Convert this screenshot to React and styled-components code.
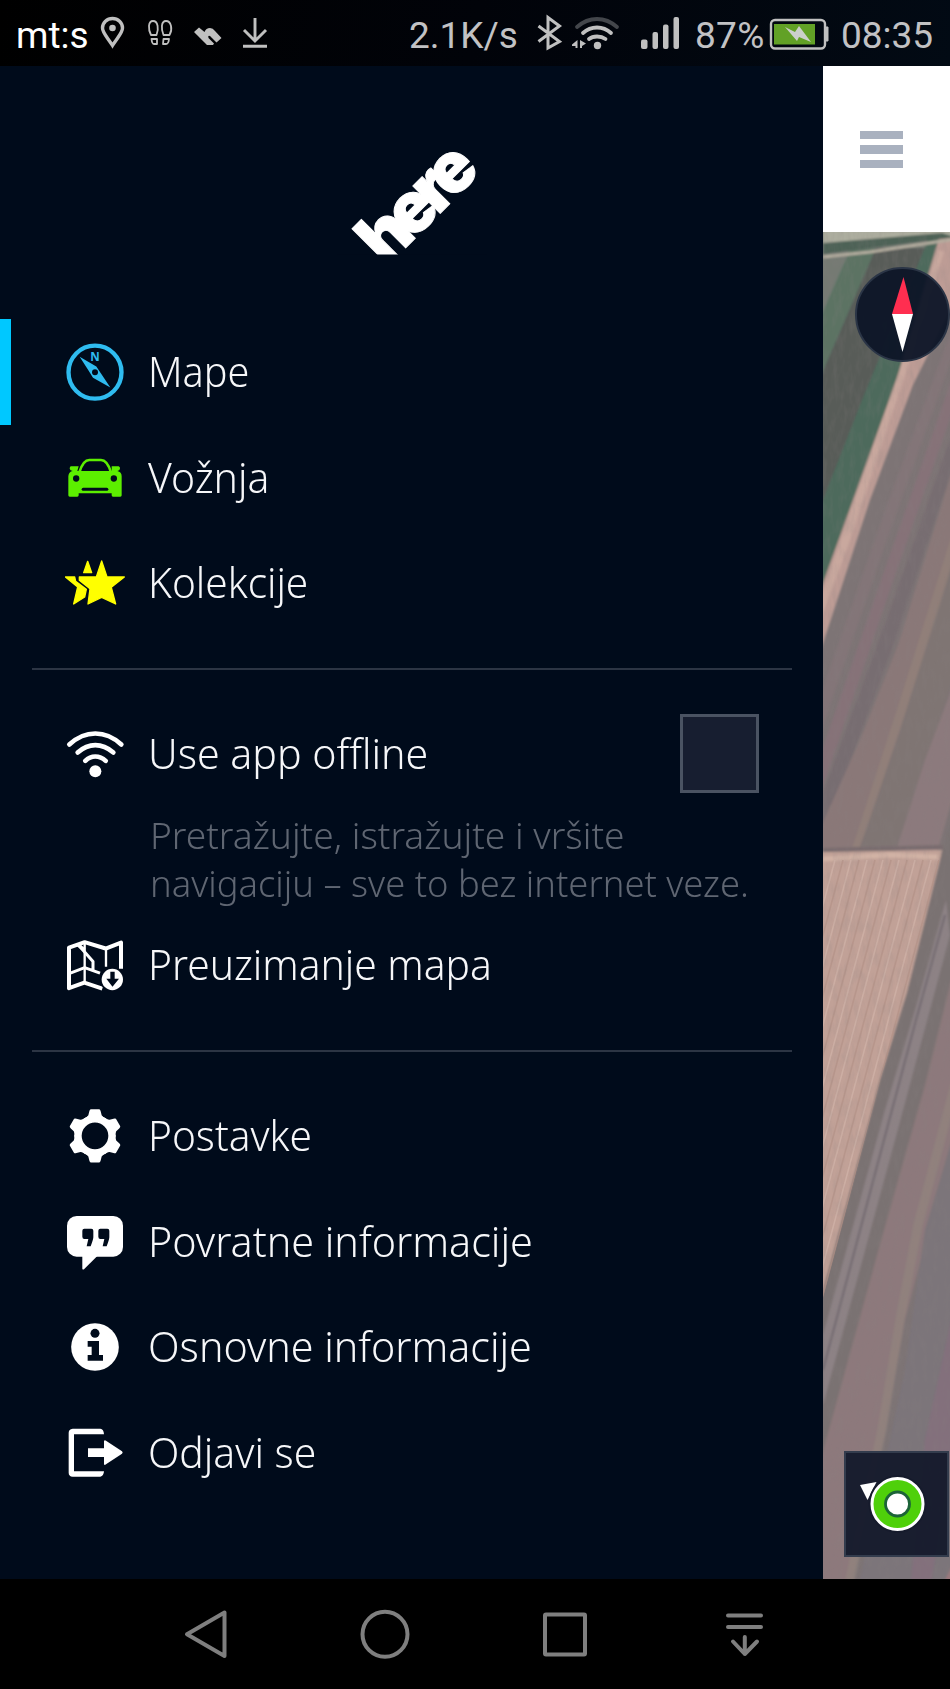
import React, { useState } from 'react';
import styled, { createGlobalStyle } from 'styled-components';

const GlobalStyle = createGlobalStyle`
  * {
    box-sizing: border-box;
  }

  body {
    margin: 0;
    background: #000;
  }
`;

const Screen = styled.div`
  display: flex;
  flex-direction: column;
  width: 950px;
  height: 1689px;
  overflow: hidden;
  font-family: 'Noto Sans', sans-serif;
`;

const StatusBar = styled.header`
  display: flex;
  justify-content: space-between;
  height: 66px;
  padding: 0 16px 0 16px;
  background: linear-gradient(100deg, #000 0%, #010309 50%, #020a14 100%);
  color: #c2c2c4;
  font-family: Roboto, sans-serif;
  font-size: 37px;
  line-height: 71px;
  white-space: nowrap;
`;

const StatusGroup = styled.div`
  display: flex;
`;

const StatusText = styled.span`
  width: ${(props) => props.$width}px;
  color: ${(props) => props.$color || 'inherit'};
  letter-spacing: ${(props) => props.$spacing || 0}px;
`;

const StatusSvg = styled.svg`
  display: block;
  flex: none;
  height: 66px;
`;

const Main = styled.main`
  display: flex;
  height: 1513px;
`;

const Drawer = styled.aside`
  display: flex;
  flex-direction: column;
  width: 823px;
  background: #000b1b;
`;

const LogoArea = styled.div`
  display: flex;
  justify-content: center;
  height: 253px;
  padding-top: 74px;
`;

const LogoSvg = styled.svg`
  width: 150px;
  height: 140px;
`;

const MenuRow = styled.div`
  display: flex;
  align-items: center;
  height: 105.6px;
  padding-right: 64px;
  padding-left: ${(props) => (props.$active ? 54 : 65)}px;
  border-left: ${(props) => (props.$active ? '11px solid #00c8ff' : 'none')};
`;

const RowIcon = styled.svg`
  flex: none;
  width: 60px;
  height: 60px;
  color: ${(props) => props.$color || '#fff'};
`;

const RowLabel = styled.span`
  flex: 1;
  margin-bottom: 1.4px;
  margin-left: 23px;
  color: #f6f7f9;
  font-size: 43px;
  font-weight: 300;
  line-height: 60px;
  white-space: nowrap;
  transform: scaleX(${(props) => props.$stretch || 0.95});
  transform-origin: left center;
`;

const Checkbox = styled.button`
  width: 79px;
  height: 79px;
  padding: 0;
  border: 3px solid #4a5362;
  background: ${(props) => (props.$checked ? '#00c8ff' : '#171e30')};
`;

const Description = styled.p`
  height: 105.6px;
  margin: 0;
  padding: 4px 0 0 150px;
  color: #5f6672;
  font-size: 37.5px;
  font-weight: 300;
  line-height: 48px;
  white-space: nowrap;
`;

const DescriptionLine = styled.span`
  display: block;
  transform: scaleX(${(props) => props.$stretch});
  transform-origin: left center;
`;

const Divider = styled.hr`
  width: 760px;
  height: 2px;
  margin: 32px 0 31.2px 32px;
  border: none;
  background: #2c3544;
`;

const MapColumn = styled.section`
  position: relative;
  width: 127px;
  overflow: hidden;
`;

const MapHeader = styled.div`
  display: flex;
  flex-direction: column;
  gap: 6px;
  height: 166px;
  padding: 65px 0 0 37px;
  background: #fff;
`;

const HamburgerBar = styled.span`
  width: 43px;
  height: 8.4px;
  background: #a9b1bf;
`;

const MapSvg = styled.svg`
  display: block;
  width: 127px;
  height: 1347px;
`;

const CompassButton = styled.div`
  position: absolute;
  top: 201px;
  left: 32px;
  width: 95px;
  height: 95px;
  border: 2px solid #2b3546;
  border-radius: 50%;
  background: rgba(12, 20, 38, 0.94);
`;

const LocateButton = styled.div`
  position: absolute;
  top: 1385px;
  left: 21px;
  width: 105px;
  height: 106px;
  border: 2px solid #333c4d;
  background: rgba(22, 27, 44, 0.97);
`;

const OverlaySvg = styled.svg`
  display: block;
  width: 100%;
  height: 100%;
`;

const NavBar = styled.nav`
  display: flex;
  height: 110px;
  padding-left: 116px;
  background: #000;
`;

const NavButton = styled.div`
  display: flex;
  align-items: center;
  justify-content: center;
  width: 179.6px;
`;

const NavSvg = styled.svg`
  width: 60px;
  height: 60px;
  fill: none;
  stroke: #7f7f7f;
  stroke-width: 4;
  stroke-linecap: round;
  stroke-linejoin: round;
`;

const DARK = '#000b1b';

// every row icon is drawn on a 180 unit grid around its own centre
function MenuIcon({ cx, cy, color, children }) {
  return (
    <RowIcon $color={color} viewBox={`${cx - 90} ${cy - 90} 180 180`} fill="currentColor">
      {children}
    </RowIcon>
  );
}

function CompassIcon() {
  return (
    <MenuIcon cx={285} cy={185.4} color="#2fbcf0">
      <circle cx="285" cy="186" r="79.5" fill="none" stroke="currentColor" strokeWidth="13" />
      <path d="M239 140L289 169L303 190L331 232L279 203L266 182Z" />
      <circle cx="285" cy="186" r="9" fill={DARK} />
      <text
        x="285"
        y="151"
        textAnchor="middle"
        fontFamily="Open Sans, sans-serif"
        fontSize="35"
        fontWeight="700"
      >
        N
      </text>
    </MenuIcon>
  );
}

function CarIcon() {
  return (
    <MenuIcon cx={285} cy={502} color="#5cef00">
      <path
        d="M238 488C246 462 254 451 268 451H303C317 451 325 462 333 488"
        fill="none"
        stroke="currentColor"
        strokeWidth="8"
      />
      <path d="M212 470H236L232 484H355L335 484V470H356Q361 472 360 477Q359 482 352 484Q365 487 365 500V557Q365 561 361 561H339Q335 561 335 557V551H236V557Q236 561 232 561H209Q205 561 205 557V500Q206 486 218 484Q210 482 209 477Q209 472 212 470Z" />
      <circle cx="228.500" cy="506.500" r="9.500" fill={DARK} />
      <circle cx="341.500" cy="506.500" r="9.500" fill={DARK} />
      <rect x="245" y="534" width="80" height="9" rx="4.500" fill={DARK} />
    </MenuIcon>
  );
}

function StarsIcon() {
  return (
    <MenuIcon cx={285} cy={819} color="#ffff00">
      <g stroke="currentColor" strokeWidth="4" strokeLinejoin="round">
        <path d="M305 753L321 801H373L334 832L347 882L305 862L264 882L270 836L238 811V801H289Z" />
        <path d="M263 754L275 788H251Z" />
        <path d="M196 801H224L227 814L259 838L254 861L221 882L233 831Z" />
      </g>
    </MenuIcon>
  );
}

function WifiIcon() {
  return (
    <MenuIcon cx={135} cy={161.4}>
      <g fill="none" stroke="currentColor" strokeWidth="14" strokeLinecap="round">
        <path d="M58 133Q94 100 136 100T214 133" />
        <path d="M83 157Q108 135 136 135T190 157" />
        <path d="M106 182Q119 169 136 169T167 182" />
      </g>
      <circle cx="136" cy="213" r="18" />
    </MenuIcon>
  );
}

function MapDownloadIcon() {
  return (
    <MenuIcon cx={135} cy={794.4}>
      <g fill="none" stroke="currentColor" strokeLinejoin="round">
        <path d="M157 865L103 847L57 864V742L104 726L167 745L213 727V806" strokeWidth="12" />
        <path d="M104 726V847M168 745V800" strokeWidth="7" />
        <path d="M57 820L104 802L150 819M86 735L129 784V808" strokeWidth="9" />
        <path d="M84 733L103 750" strokeWidth="11" />
      </g>
      <circle cx="187" cy="838" r="37" fill={DARK} />
      <circle cx="187" cy="838" r="32" />
      <path d="M181 815H194V836H207L187.500 860L169 836H181Z" fill={DARK} />
    </MenuIcon>
  );
}

function GearIcon() {
  return (
    <MenuIcon cx={135} cy={137.4}>
      <circle cx="135" cy="137" r="51" fill="none" stroke="currentColor" strokeWidth="22" />
      {[0, 60, 120, 180, 240, 300].map((angle) => (
        <path
          key={angle}
          d="M122 57H148Q151 58 152 63L155 75Q158 81 168 85L152 92H118L102 85Q112 81 115 75L118 63Q119 58 122 57Z"
          transform={`rotate(${angle} 135 137)`}
        />
      ))}
    </MenuIcon>
  );
}

function FeedbackIcon() {
  return (
    <MenuIcon cx={135} cy={454}>
      <rect x="51" y="379" width="168" height="122" rx="29" />
      <path d="M97 495V537Q98 541 102 539L142 499Z" />
      {[0, 48].map((shift) => (
        <path
          key={shift}
          d="M103 417H124Q130 417 130 423V443Q130 449 122 470H110L115 448H103Q97 448 97 441V423Q97 417 103 417Z"
          transform={`translate(${shift} 0)`}
          fill={DARK}
        />
      ))}
    </MenuIcon>
  );
}

function InfoIcon() {
  return (
    <MenuIcon cx={135} cy={771}>
      <circle cx="135" cy="771" r="71.500" />
      <circle cx="135" cy="730" r="13.500" fill={DARK} />
      <path d="M113 753H147V795H159V812H113V795H125V770H113Z" fill={DARK} />
    </MenuIcon>
  );
}

function SignOutIcon() {
  return (
    <MenuIcon cx={135} cy={1088}>
      <path d="M68 1015H151Q161 1016 162 1032H72V1143H162Q161 1158 151 1159H68Q56 1158 56 1147V1027Q56 1016 68 1015Z" />
      <path d="M114 1074H162V1053Q163 1048 168 1051L216 1083Q220 1087 216 1090L168 1122Q163 1126 162 1121V1100H114Z" />
    </MenuIcon>
  );
}

function Logo() {
  return (
    <LogoArea>
      <LogoSvg viewBox="337 140 150 140">
        <text
          transform="translate(386 267.500) rotate(-45) scale(0.945 0.97)"
          fill="#fff"
          stroke="#fff"
          strokeWidth="1"
          fontFamily="Inter, sans-serif"
          fontSize="73"
          fontWeight="900"
          letterSpacing="-7.2"
        >
          here
        </text>
        <rect x="337" y="254.500" width="150" height="26" fill={DARK} />
      </LogoSvg>
    </LogoArea>
  );
}

function PhoneStatusBar() {
  return (
    <StatusBar>
      <StatusGroup>
        <StatusText $width={78} $color="#fff">mt:s</StatusText>
        <StatusSvg width="180" viewBox="94 0 180 66" fill="none" stroke="#c0c0c0">
          <path
            d="M112.500 45.500C108 38 102.500 33 102.500 28A10 9.500 0 0 1 122.500 28C122.500 33 117 38 112.500 45.500Z"
            strokeWidth="3.400"
          />
          <circle cx="112.500" cy="28" r="3.300" fill="#c0c0c0" stroke="none" />
          <g strokeWidth="1.800" strokeLinejoin="round">
            <path d="M151 35C148 29 148 21 153 21S159 29 156.500 35Z" />
            <path d="M163.500 35C161 29 161 21 166 21S173 29 169.500 35Z" />
            <path d="M151.500 39H157V44H154Q152 44 151.500 39Z" />
            <path d="M163.500 39H169Q168.500 44 166 44H163Z" />
          </g>
          <path
            d="M194 32L199 27.500L204.500 32Q206 28 210 28Q213 28 215 31L221.500 38L216.500 42.500L210 36Q207.500 35 208.500 38L214 43.500L213 45H207Z"
            fill="#c0c0c0"
            stroke="none"
          />
          <path d="M255 18V41M244 30L255 41L266 30M243 46.300H267" strokeWidth="2.900" />
        </StatusSvg>
      </StatusGroup>
      <StatusGroup>
        <StatusText $width={120}>2.1K/s</StatusText>
        <StatusSvg width="166" viewBox="529 0 166 66" fill="none" stroke="#c0c0c0">
          <path d="M538.500 26L559.500 41.500L548 48V17.500L559.500 26L538.500 41.500" strokeWidth="3" />
          <g strokeWidth="3.800" strokeLinecap="round">
            <path d="M577 27Q586 19 597 19T617 27" stroke="#43464b" />
            <path d="M583 33Q589 27.500 597 27.500T611 33" />
            <path d="M589 39Q592 36.500 597 36.500T605.500 39" />
          </g>
          <g fill="#c0c0c0" stroke="none">
            <circle cx="597.500" cy="45.500" r="3.700" />
            <path d="M572 44.500L577.500 40V48H575.500V46H572ZM580 40L586 43.500L582 46V48H580Z" />
            <rect x="641" y="39.500" width="6.500" height="9.500" rx="2" />
            <rect x="652.500" y="32" width="5.500" height="17" rx="2" />
            <rect x="663" y="24.500" width="5.500" height="24.500" rx="2" />
            <rect x="673.500" y="17" width="5.500" height="32" rx="2" />
          </g>
        </StatusSvg>
        <StatusText $width={74} $spacing={0.3}>87%</StatusText>
        <StatusSvg width="72" viewBox="769 0 72 66">
          <rect x="771" y="20" width="54" height="28.500" rx="4" fill="none" stroke="#c0c0c0" strokeWidth="2.400" />
          <path d="M826 27H828V41H826Z" fill="#c0c0c0" stroke="#c0c0c0" />
          <rect x="774" y="24" width="41" height="20.500" fill="#62a126" />
          <path d="M785 27L795 32L799 26L805 34L811 42L799 37L797 41Z" fill="#cbd0cb" />
        </StatusSvg>
        <StatusText $width={93}>08:35</StatusText>
      </StatusGroup>
    </StatusBar>
  );
}

function Aerial() {
  const furrows = Array.from({ length: 34 }, (_, i) => i * 8);

  return (
    <MapSvg viewBox="823 232 127 1347" preserveAspectRatio="none">
      <defs>
        <filter id="soil" x="0" y="0" width="1" height="1">
          <feTurbulence type="fractalNoise" baseFrequency="0.18 0.06" numOctaves="3" seed="4" />
          <feColorMatrix values="0 0 0 0 0.25  0 0 0 0 0.22  0 0 0 0 0.22  0.9 0 0 0 -0.36" />
        </filter>
        <filter id="soften">
          <feGaussianBlur stdDeviation="1.2" />
        </filter>
        <clipPath id="peachField">
          <path d="M823 860L940 858L907 993L880 1080L823 1300Z" />
        </clipPath>
      </defs>
      <rect x="823" y="232" width="127" height="1347" fill="#7d7475" />
      <g filter="url(#soften)">
        <path d="M815 225H955L815 390Z" fill="#747a73" />
        <path d="M850 250L880 248L815 392V330Z" fill="#5b7364" />
        <path d="M876 248H930L880 372L815 525V390Z" fill="#585c59" />
        <path d="M928 240H942L897 378L815 615V520L862 400Z" fill="#4d6a5c" />
        <path d="M940 235H960V290L913 385L870 500L815 668V605L897 378Z" fill="#bd9c95" />
        <path d="M938 250L944 252L906 372L850 540L815 635V615L897 378Z" fill="#c9a89e" />
        <path d="M955 350L887 540L815 750V710L885 510L955 320Z" fill="#857579" opacity="0.7" />
        <path d="M955 405L890 590L815 810V770L888 560L955 370Z" fill="#887279" opacity="0.8" />
        <path d="M955 460L895 640L815 855V815L890 610L955 425Z" fill="#766b71" opacity="0.8" />
        <path d="M955 462L898 645L860 740L815 840V855H857L900 730L955 550Z" fill="#8a7878" />
        <path d="M955 525L900 700L850 855H857L905 725L955 555Z" fill="#948279" opacity="0.7" />
        <path d="M955 557V675L893 860H856L900 730Z" fill="#7f7573" />
        <path d="M955 680L925 760L893 860H935L955 790Z" fill="#8c7a7d" />
        <path d="M823 228H955V237L885 244L823 245Z" fill="#adae9f" />
        <path d="M823 243L942 233L955 237L823 254Z" fill="#4e6256" />
        <path d="M823 257L870 252L955 239" fill="none" stroke="#b4ad9f" strokeWidth="3" />
        <path d="M815 852L942 850L940 862L907 993L880 1080L815 1330Z" fill="#c1a197" />
        <path d="M823 859L890 855L938 857" fill="none" stroke="#d1b2a5" strokeWidth="5" />
        <path d="M823 850L943 847" stroke="#796c6e" strokeWidth="4" />
        <path d="M942 852L960 790V1000L905 1170L815 1500V1320L880 1080L907 993Z" fill="#7a7272" />
        <path d="M946 900L915 1010L885 1110L823 1335V1405L895 1140L950 935Z" fill="#8d8285" />
        <path d="M945 915L916 1020L880 1155L823 1370" fill="none" stroke="#716970" strokeWidth="2" />
        <path d="M960 945L925 1085L884 1230L815 1480V1590H850L884 1435L905 1320L960 1110Z" fill="#8d797b" />
        <path d="M955 1085L918 1225L900 1320L882 1430L850 1580" fill="none" stroke="#93847f" strokeWidth="9" opacity="0.7" />
        <path d="M955 1130L925 1230L905 1370L858 1590H960V1130Z" fill="#7b747a" />
        <path d="M960 1280L925 1440L910 1590H930L960 1400Z" fill="#83707c" />
        <path d="M960 1550V1590H940Z" fill="#9c787d" />
      </g>
      <g clipPath="url(#peachField)" fill="none" strokeWidth="1.600">
        {furrows.map((offset) => (
          <path
            key={offset}
            d={`M${835 + offset} 860L${715 + offset} 1310`}
            stroke={offset % 16 ? '#b29186' : '#d2b5aa'}
            opacity="0.65"
          />
        ))}
      </g>
      <rect x="823" y="232" width="127" height="1347" filter="url(#soil)" opacity="0.4" />
    </MapSvg>
  );
}

function MapPanel() {
  return (
    <MapColumn>
      <MapHeader>
        <HamburgerBar />
        <HamburgerBar />
        <HamburgerBar />
      </MapHeader>
      <Aerial />
      <CompassButton>
        <OverlaySvg viewBox="857 269 91 91">
          <path d="M903.500 277L913 314H892Z" fill="#ff2e50" />
          <path d="M892 314H913L902.500 352Z" fill="#fff" />
        </OverlaySvg>
      </CompassButton>
      <LocateButton>
        <OverlaySvg viewBox="846 1453 101 102">
          <path d="M860 1485L876.500 1482L867.500 1500Z" fill="#fff" />
          <circle cx="897.500" cy="1504" r="29" fill="#161b2c" />
          <circle cx="897.500" cy="1504" r="25.500" fill="#4fd00a" stroke="#fff" strokeWidth="3" />
          <circle cx="897.500" cy="1504" r="12" fill="#fff" stroke="#1c6338" strokeWidth="2.800" />
        </OverlaySvg>
      </LocateButton>
    </MapColumn>
  );
}

function App() {
  const [offline, setOffline] = useState(false);

  return (
    <Screen>
      <GlobalStyle />
      <PhoneStatusBar />
      <Main>
        <Drawer>
          <Logo />
          <MenuRow $active>
            <CompassIcon />
            <RowLabel $stretch={0.92}>Mape</RowLabel>
          </MenuRow>
          <MenuRow>
            <CarIcon />
            <RowLabel>Vožnja</RowLabel>
          </MenuRow>
          <MenuRow>
            <StarsIcon />
            <RowLabel $stretch={0.943}>Kolekcije</RowLabel>
          </MenuRow>
          <Divider />
          <MenuRow>
            <WifiIcon />
            <RowLabel $stretch={0.956}>Use app offline</RowLabel>
            <Checkbox $checked={offline} onClick={() => setOffline(!offline)} />
          </MenuRow>
          <Description>
            <DescriptionLine $stretch={0.99}>Pretražujte, istražujte i vršite</DescriptionLine>
            <DescriptionLine $stretch={0.97}>navigaciju – sve to bez internet veze.</DescriptionLine>
          </Description>
          <MenuRow>
            <MapDownloadIcon />
            <RowLabel $stretch={0.947}>Preuzimanje mapa</RowLabel>
          </MenuRow>
          <Divider />
          <MenuRow>
            <GearIcon />
            <RowLabel $stretch={0.944}>Postavke</RowLabel>
          </MenuRow>
          <MenuRow>
            <FeedbackIcon />
            <RowLabel $stretch={0.959}>Povratne informacije</RowLabel>
          </MenuRow>
          <MenuRow>
            <InfoIcon />
            <RowLabel $stretch={0.957}>Osnovne informacije</RowLabel>
          </MenuRow>
          <MenuRow>
            <SignOutIcon />
            <RowLabel>Odjavi se</RowLabel>
          </MenuRow>
        </Drawer>
        <MapPanel />
      </Main>
      <NavBar>
        <NavButton>
          <NavSvg viewBox="176 1604 60 60">
            <path d="M187 1634.300L224.500 1612.500V1656Z" />
          </NavSvg>
        </NavButton>
        <NavButton>
          <NavSvg viewBox="355 1604 60 60">
            <circle cx="385" cy="1634.300" r="22.500" />
          </NavSvg>
        </NavButton>
        <NavButton>
          <NavSvg viewBox="535 1604 60 60">
            <rect x="545" y="1614.500" width="40" height="40" rx="1" />
          </NavSvg>
        </NavButton>
        <NavButton>
          <NavSvg viewBox="715 1604 60 60">
            <path d="M728 1615.500H761M728 1627H761M744.800 1637V1654M733 1641.500L744.800 1654L757 1641.500" />
          </NavSvg>
        </NavButton>
      </NavBar>
    </Screen>
  );
}

export default App;
